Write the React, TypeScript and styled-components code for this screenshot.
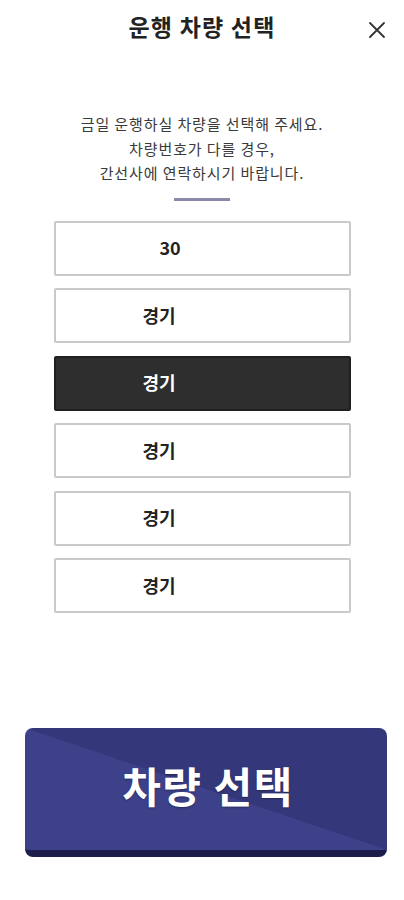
import React, { useState } from "react";
import styled, { createGlobalStyle } from "styled-components";

const Global = createGlobalStyle`
  html, body { margin: 0; padding: 0; background: #ffffff; }
  body { font-family: "Noto Sans CJK KR", "Noto Sans", sans-serif; }
  * { box-sizing: border-box; }
`;

const Page = styled.div`
  width: 404px;
  height: 900px;
  display: flex;
  flex-direction: column;
  align-items: center;
  background: #fff;
`;

const Header = styled.header`
  width: 100%;
  height: 56px;
  display: flex;
  align-items: center;
  justify-content: center;
  position: relative;
`;

const Title = styled.h1`
  margin: 0;
  font-size: 23px;
  font-weight: 700;
  color: #222;
  letter-spacing: 1.2px;
  line-height: 1;
  margin-top: -4px;
`;

const Close = styled.button`
  position: absolute;
  right: 17px;
  top: 20px;
  width: 20px;
  height: 20px;
  padding: 0;
  border: none;
  background: transparent;
  display: flex;
  align-items: center;
  justify-content: center;
  cursor: pointer;
`;

const Notice = styled.p`
  margin: 56px 0 0;
  font-size: 15px;
  line-height: 24.5px;
  letter-spacing: 0.9px;
  color: #3a3a3a;
  text-align: center;
`;

const Divider = styled.div`
  width: 56px;
  height: 3px;
  background: #8b89a8;
  margin-top: 12px;
`;

const List = styled.div`
  margin-top: 20px;
  width: 297px;
  display: flex;
  flex-direction: column;
  gap: 12.5px;
`;

const Card = styled.button<{ $selected: boolean; $indent: number }>`
  height: 55px;
  width: 100%;
  display: flex;
  align-items: center;
  padding: 0 0 2px ${(p) => p.$indent}px;
  border-radius: 2px;
  border: 2px solid ${(p) => (p.$selected ? "#1f1f1f" : "#c9c9c9")};
  background: ${(p) => (p.$selected ? "#2e2e2e" : "#ffffff")};
  color: ${(p) => (p.$selected ? "#ffffff" : "#222")};
  font-family: "Noto Sans CJK KR", "Noto Sans", sans-serif;
  font-size: 18px;
  font-weight: 700;
  cursor: pointer;
`;

const Spacer = styled.div`
  flex: 1;
`;

const SelectButton = styled.button`
  margin: 0 17px 43px 25px;
  width: 362px;
  height: 129px;
  border: none;
  border-bottom: 7px solid #1c1d4b;
  border-radius: 8px;
  background: linear-gradient(to bottom left, #34387b 50%, #3c418a 50%);
  color: #fff;
  font-family: "Noto Sans CJK KR", "Noto Sans", sans-serif;
  font-size: 42px;
  font-weight: 700;
  letter-spacing: 1.5px;
  text-shadow: 0 1px 2px rgba(0, 0, 0, 0.35);
  display: flex;
  align-items: center;
  justify-content: center;
  padding: 0 0 10px 4px;
  cursor: pointer;
`;

const items = [
  { label: "30", indent: 104 },
  { label: "경기", indent: 87 },
  { label: "경기", indent: 87 },
  { label: "경기", indent: 87 },
  { label: "경기", indent: 87 },
  { label: "경기", indent: 87 },
];

export default function App() {
  const [selected, setSelected] = useState(2);
  return (
    <>
      <Global />
      <Page>
        <Header>
          <Title>운행 차량 선택</Title>
          <Close aria-label="닫기">
            <svg width="18" height="18" viewBox="0 0 18 18">
              <path d="M2 2 L16 16 M16 2 L2 16" stroke="#333" strokeWidth="1.8" strokeLinecap="round" />
            </svg>
          </Close>
        </Header>
        <Notice>
          금일 운행하실 차량을 선택해 주세요.
          <br />
          차량번호가 다를 경우,
          <br />
          간선사에 연락하시기 바랍니다.
        </Notice>
        <Divider />
        <List>
          {items.map((it, i) => (
            <Card
              key={i}
              $selected={selected === i}
              $indent={it.indent}
              onClick={() => setSelected(i)}
            >
              {it.label}
            </Card>
          ))}
        </List>
        <Spacer />
        <SelectButton>차량 선택</SelectButton>
      </Page>
    </>
  );
}
